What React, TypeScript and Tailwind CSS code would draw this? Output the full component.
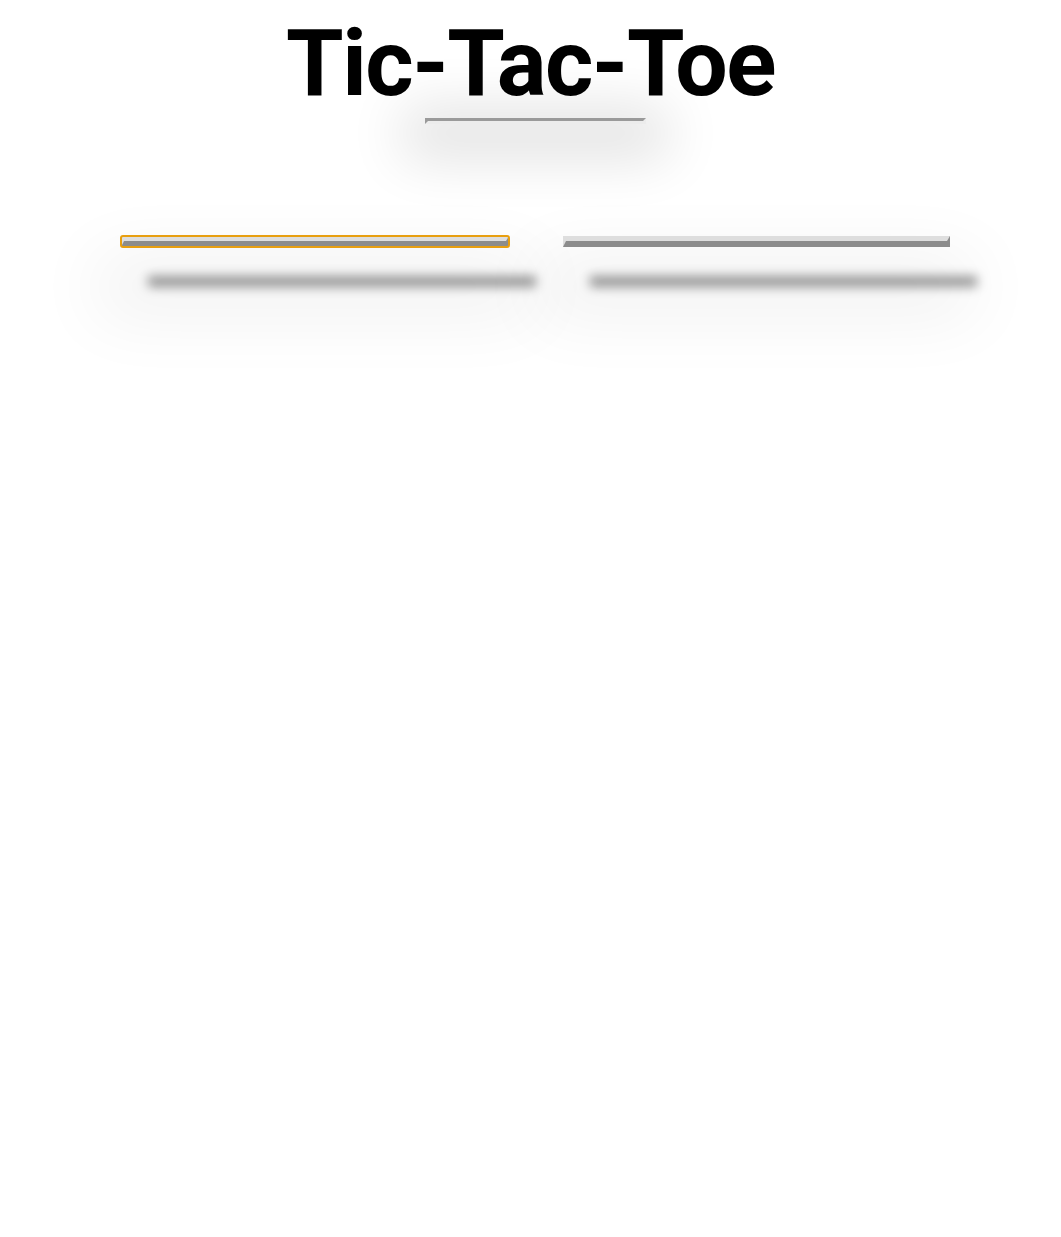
import React from "react";

export default function App() {
  return (
    <div className="min-h-[1237px] w-full bg-white font-['Roboto',_'Liberation_Sans',_sans-serif]">
      <div className="h-0 w-full shadow-[0_0_5px_rgba(0,0,0,0.35)]" />
      <h1 className="pt-[17px] text-center text-[93px] font-bold leading-none tracking-[-1.5px] text-black">
        Tic-Tac-Toe
      </h1>
      <div className="mt-[8px] flex pl-[425px]">
        <div className="h-[6px] w-[221px] border-[3px] border-t-[#9a9a9a] border-l-[#9a9a9a] border-b-[#ececec] border-r-[#ececec] shadow-[0_12px_55px_22px_rgba(0,0,0,0.12)]" />
      </div>
      <div className="mt-[112px] flex gap-[54px] pl-[121px]">
        <button className="h-[11px] w-[388px] rounded-[2px] border-t-[5px] border-b-[6px] border-x-[3px] border-t-[#dedede] border-l-[#dedede] border-b-[#8c8c8c] border-r-[#8c8c8c] bg-[#cfcfcf] outline-2 outline-offset-[-1px] outline-[#e89f10] shadow-[27px_40px_11px_rgba(0,0,0,0.4),0_45px_70px_25px_rgba(0,0,0,0.06)]" />
        <button className="h-[11px] w-[387px] border-t-[5px] border-b-[6px] border-x-[3px] border-t-[#dedede] border-l-[#dedede] border-b-[#8c8c8c] border-r-[#8c8c8c] bg-[#cfcfcf] shadow-[27px_40px_11px_rgba(0,0,0,0.4),0_45px_70px_25px_rgba(0,0,0,0.06)]" />
      </div>
    </div>
  );
}
